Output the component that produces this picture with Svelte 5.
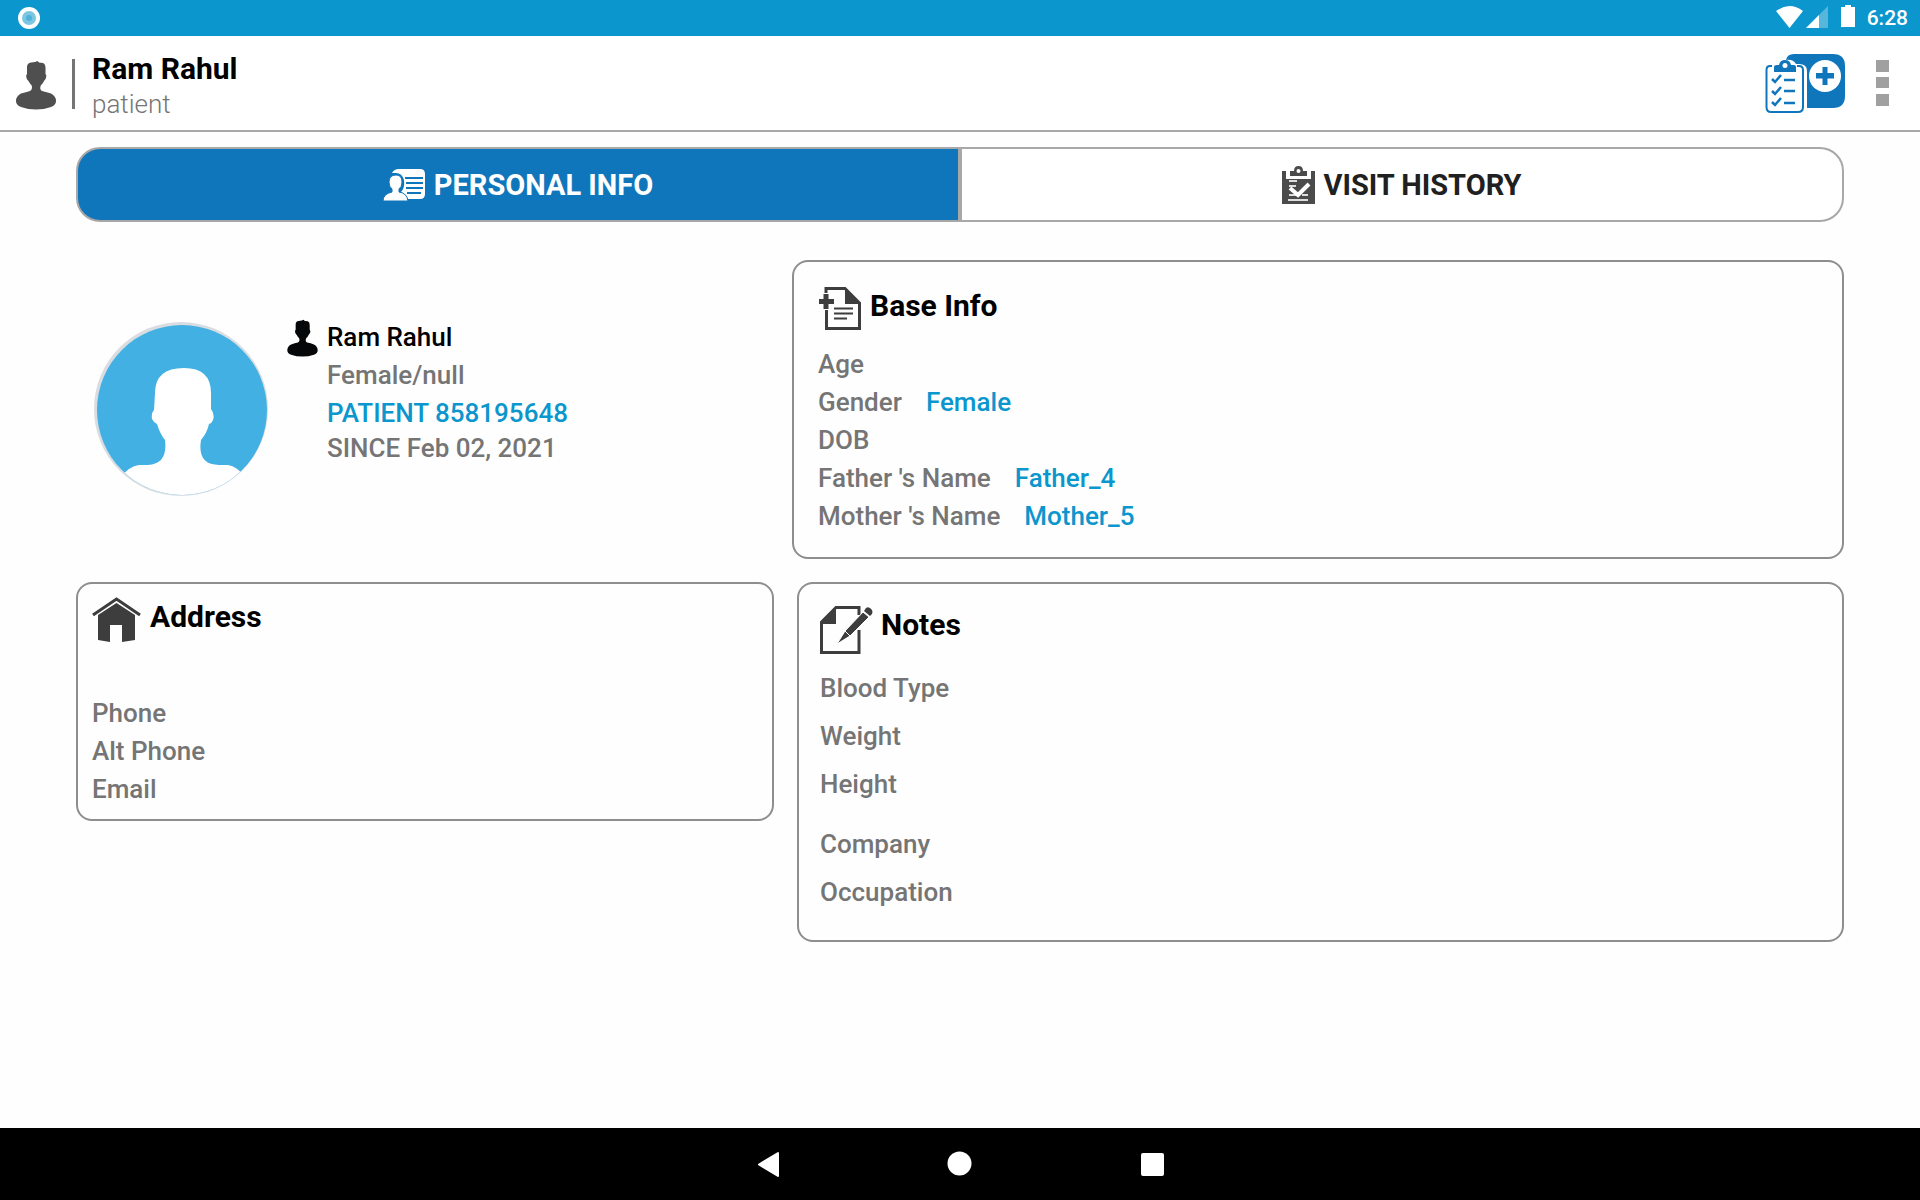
<script>
  let activeTab = $state('personal');

  const baseInfo = [
    { label: 'Age', value: '' },
    { label: 'Gender', value: 'Female' },
    { label: 'DOB', value: '' },
    { label: "Father 's Name", value: 'Father_4' },
    { label: "Mother 's Name", value: 'Mother_5' }
  ];
  const contact = ['Phone', 'Alt Phone', 'Email'];
  const body = ['Blood Type', 'Weight', 'Height'];
  const work = ['Company', 'Occupation'];
</script>

{#snippet person()}
  <svg class="person" viewBox="0 0 42 50" aria-hidden="true">
    <path fill="currentColor" d="M12 7 Q12 3 16 2.500 L20 2 L22.500 1 L24 2.500 L28 3 Q30.500 4 30.500 8 V14 Q32 15 31 18 Q30 20 29 21 Q27.500 24 26 25 Q24 29 27 31 Q32 32 36 33.500 Q41 36 41 41 Q41 45 36 47 Q29 49.500 21 49.500 Q13 49.500 6 47 Q1 45 1 41 Q1 36 6 33.500 Q11 32 15 31 Q18 29 16.500 25 Q15 24 13.500 21 Q12 20 11.500 18 Q10.500 15 12 14 Z" />
  </svg>
{/snippet}

<div class="screen">
  <div class="status">
    <svg width="24" height="24" viewBox="0 0 24 24" aria-hidden="true">
      <circle cx="12" cy="12" r="11" fill="#fff" />
      <circle cx="12" cy="12" r="7" fill="#7cc6e2" />
      <circle cx="12" cy="12" r="3" fill="#4cb2da" />
    </svg>
    <div class="system">
      <svg width="80" height="24" viewBox="0 0 80 24" aria-hidden="true">
        <path fill="#fff" d="M0 6 Q13.500 -4 27 6 L13.500 23 Z" />
        <path fill="#57b6dc" d="M52 1 V23 H30 Z" />
        <path fill="#fff" d="M43 10 V23 H30 Z" />
        <path fill="#fff" d="M69 0 H75 V2 H79 V22 H65 V2 H69 Z" />
      </svg>
      <time>6:28</time>
    </div>
  </div>

  <header>
    {@render person()}
    <div class="bar"></div>
    <div class="who">
      <h1>Ram Rahul</h1>
      <p>patient</p>
    </div>
    <button class="add" aria-label="Add visit">
      <svg width="80" height="60" viewBox="0 0 80 60" aria-hidden="true">
        <path fill="#1076bc" d="M21 6 Q22 0 29 0 H68 Q80 0 80 12 V42 Q80 54 68 54 H42 V17 Q42 10 34 10 H31 Q28 5 21 6 Z" />
        <circle cx="60" cy="22" r="16" fill="#fff" />
        <path fill="#1076bc" d="M57.500 13 H62.500 V19 H69 V24.500 H62.500 V31 H57.500 V24.500 H51 V19 H57.500 Z" />
        <path fill="none" stroke="#1076bc" stroke-width="2" d="M7 12 H5 Q1.500 12 1.500 16 V53 Q1.500 58 6 58 H33 Q38 58 38 53 V16 Q38 12 34 12 H32" />
        <path fill="#1076bc" d="M9 18 V13 Q9 11 12 11 H14 Q15 6 20 6 Q25 6 26 11 H29 Q31 11 31 13 V18 Z" />
        <circle cx="20" cy="11.500" r="2.500" fill="#fff" />
        <path fill="none" stroke="#1076bc" stroke-width="2.500" d="M7 25 L10 28 L16 21 M7 37 L10 40 L16 33 M7 48 L10 51 L16 44 M19 26 H30 M19 37 H30 M19 49 H30" />
      </svg>
    </button>
    <button class="menu" aria-label="More options">
      <svg width="14" height="46" viewBox="0 0 14 46" aria-hidden="true">
        <path fill="#a0a0a0" d="M0 0 H13 V12 H0 Z M0 17 H13 V28 H0 Z M0 34 H13 V46 H0 Z" />
      </svg>
    </button>
  </header>

  <main>
    <div class="tabs" role="tablist">
      <button role="tab" class:active={activeTab === 'personal'} aria-selected={activeTab === 'personal'} onclick={() => (activeTab = 'personal')}>
        <svg width="43" height="34" viewBox="0 0 43 34" aria-hidden="true">
          <path fill="#fff" d="M9 5 Q11 1 16 1 H37 Q42 1 42 6 V26 Q42 31 37 31 H25 Q23 26 18 24 Q22 20 21 12 Q19 5 13 5 Z" />
          <path stroke="#1076bc" stroke-width="2" d="M22 10 H40 M23 15 H40 M23 20 H40 M24 25 H38" />
          <path fill="#fff" stroke="#1076bc" d="M13 7 Q19 7 19 14 Q19 19 16 21 V24 Q24 25 25 33 H0 Q0 26 9 24 V21 Q6 19 6 14 Q6 7 13 7 Z" />
        </svg>
        <span>PERSONAL INFO</span>
      </button>
      <button role="tab" class:active={activeTab === 'visits'} aria-selected={activeTab === 'visits'} onclick={() => (activeTab = 'visits')}>
        <svg width="33" height="38" viewBox="0 0 33 38" aria-hidden="true">
          <path fill="#4b4b4b" d="M0 5 H4 V12 H29 V5 H33 V38 H0 Z" />
          <path fill="#4b4b4b" d="M8 10 V5 H12 Q12 0 16.500 0 Q21 0 21 5 H25 V10 Z" />
          <circle cx="16.500" cy="5" r="2" fill="#fff" />
          <path fill="none" stroke="#fff" stroke-width="2" d="M5 5 V12 H28 V5" />
          <path fill="none" stroke="#ddd" stroke-width="2" d="M7 15 H15 M6 34 H26 M7 20 H14 M7 29 H14 M20 29 H26" />
          <path fill="none" stroke="#fff" stroke-width="4" d="M8 22 L16 29 L27 18" />
        </svg>
        <span>VISIT HISTORY</span>
      </button>
    </div>

    <div class="top">
      <section class="profile">
        <svg class="avatar" viewBox="0 0 174 174" role="img" aria-label="Ram Rahul">
          <defs>
            <clipPath id="disc"><circle cx="88" cy="88" r="85" /></clipPath>
          </defs>
          <circle cx="87" cy="87" r="87" fill="#d9dde1" />
          <circle cx="88" cy="88" r="85" fill="#42b0e3" />
          <path clip-path="url(#disc)" fill="#fff" d="M61 71 Q61 46 90 46 Q117 46 117 71 V87 Q121 92 119 98 Q118 101 115 102 Q113 111 107 118 Q103 143 125 143 H134 Q143 144 153 157 V180 H25 V157 Q35 144 45 143 H54 Q74 142 71 118 Q66 112 63 102 Q60 101 58 97 Q57 91 60 88 Z" />
        </svg>
        {@render person()}
        <div class="lines">
          <p class="name">Ram Rahul</p>
          <p>Female/null</p>
          <p class="value">PATIENT 858195648</p>
          <p class="since">SINCE Feb 02, 2021</p>
        </div>
      </section>

      <section class="card base">
        <h2>
          <svg width="44" height="44" viewBox="0 0 44 44" aria-hidden="true">
            <path fill="none" stroke="#3d3d3d" stroke-width="3" d="M8 7 V2.500 H27 L41.500 17 V42.500 H8.500 V24" />
            <path fill="#3d3d3d" d="M27 2 L42 17 V18 H27 Z" />
            <path stroke="#3d3d3d" stroke-width="5" d="M8 8 V23 M1 15.500 H16" />
            <path stroke="#3d3d3d" stroke-width="2" d="M16 22.500 H35 M16 27.500 H35 M16 32.500 H29" />
          </svg>
          <span>Base Info</span>
        </h2>
        <dl>
          {#each baseInfo as row}
            <div>
              <dt>{row.label}</dt>
              <dd class="value">{row.value}</dd>
            </div>
          {/each}
        </dl>
      </section>
    </div>

    <div class="bottom">
      <section class="card address">
        <h2>
          <svg width="50" height="46" viewBox="0 0 50 46" aria-hidden="true">
            <path fill="none" stroke="#3d3d3d" stroke-width="3" d="M1 18 L24.500 2 L48 18" />
            <path fill="#3d3d3d" d="M6 18 L24.500 6 L43 18 V43 L30 45 V28 H18 V45 L6 43 Z" />
          </svg>
          <span>Address</span>
        </h2>
        <ul>
          {#each contact as label}<li>{label}</li>{/each}
        </ul>
      </section>

      <section class="card notes">
        <h2>
          <svg width="55" height="50" viewBox="0 0 55 50" aria-hidden="true">
            <path fill="none" stroke="#3d3d3d" stroke-width="3" d="M41 10 V2.500 H18 L3.500 17 V47.500 H41 V25" />
            <path fill="#3d3d3d" d="M18 2 V19 H3 V17 Z" />
            <path fill="#3d3d3d" stroke="#fff" d="M19 39 L27 26 L45 7 L51 12 L32 31 Z" />
            <path fill="#3d3d3d" d="M46 6 L48 3 Q51 1 54 5 Q55 7 54 9 L52 11 Z" />
            <path stroke="#fff" d="M27 26 L32 31" />
          </svg>
          <span>Notes</span>
        </h2>
        <ul>
          {#each body as label}<li>{label}</li>{/each}
        </ul>
        <ul class="work">
          {#each work as label}<li>{label}</li>{/each}
        </ul>
      </section>
    </div>
  </main>

  <nav aria-label="System navigation">
    <button aria-label="Back">
      <svg width="26" height="26" viewBox="0 0 26 26" aria-hidden="true"><path fill="#fff" stroke="#fff" stroke-width="2" stroke-linejoin="round" d="M23 2 V25 L4 13.500 Z" /></svg>
    </button>
    <button aria-label="Home">
      <svg width="26" height="26" viewBox="0 0 26 26" aria-hidden="true"><circle cx="12.500" cy="12.500" r="12" fill="#fff" /></svg>
    </button>
    <button aria-label="Recent apps">
      <svg width="26" height="26" viewBox="0 0 26 26" aria-hidden="true"><rect x="2" y="2" width="23" height="23" rx="2" fill="#fff" /></svg>
    </button>
  </nav>
</div>

<style>
  :global(body) {
    margin: 0;
  }
  .screen {
    box-sizing: border-box;
    display: flex;
    flex-direction: column;
    min-height: 100vh;
    background: #fefefe;
    color: #757575;
    font-family: Roboto, 'Liberation Sans', sans-serif;
    font-size: 26px;
    font-weight: 500;
    line-height: 38px;
  }
  h1, h2, p, ul, dl, dd {
    margin: 0;
    padding: 0;
  }
  ul {
    list-style: none;
  }
  svg {
    display: block;
    flex: none;
  }
  button {
    display: flex;
    align-items: center;
    justify-content: center;
    border: 0;
    padding: 0;
    background: none;
    font: inherit;
    cursor: pointer;
  }
  .status {
    display: flex;
    align-items: center;
    justify-content: space-between;
    height: 36px;
    padding: 0 12px 0 17px;
    background: #0b96cd;
    color: #fff;
    font-size: 21px;
  }
  .system {
    display: flex;
    align-items: center;
    gap: 11px;
  }
  .system svg {
    margin-bottom: 2px;
  }
  header {
    display: flex;
    align-items: flex-start;
    padding: 14px 30px 10px 15px;
    border-bottom: 2px solid #a8a8a8;
    background: #fff;
  }
  .person {
    width: 42px;
    height: 50px;
  }
  header .person {
    margin-top: 10px;
    color: #4f4f4f;
  }
  .bar {
    width: 3px;
    height: 50px;
    margin: 9px 17px 0 15px;
    background: #757575;
  }
  .who {
    flex: 1;
  }
  h1, h2 {
    color: #000;
    font-size: 30px;
    font-weight: 700;
    line-height: 38px;
  }
  .who p {
    font-weight: 300;
    line-height: 32px;
  }
  .add {
    margin: 4px 31px 0 0;
  }
  .menu {
    margin-top: 10px;
  }
  main {
    flex: 1;
    padding: 15px 76px 24px;
  }
  .tabs {
    display: grid;
    grid-template-columns: 1fr 1fr;
    gap: 4px;
    overflow: hidden;
    border: 2px solid #a8a8a8;
    border-radius: 24px;
    background: #a8a8a8;
  }
  .tabs button {
    gap: 8px;
    height: 71px;
    background: #fff;
    color: #202020;
    font-size: 29px;
    font-weight: 700;
  }
  .tabs button.active {
    background: #1076bc;
    color: #fff;
  }
  .top {
    display: grid;
    grid-template-columns: 716fr 1052fr;
    margin-top: 38px;
  }
  .bottom {
    display: grid;
    grid-template-columns: 698fr 1047fr;
    align-items: start;
    gap: 23px;
    margin-top: 23px;
  }
  .profile {
    display: flex;
    align-items: flex-start;
    padding: 58px 0 0 18px;
  }
  .avatar {
    width: 174px;
    height: 174px;
    margin: 4px 18px 0 0;
  }
  .profile .person {
    width: 33px;
    height: 38px;
    margin: 1px 8px 0 0;
    color: #060708;
  }
  .name {
    color: #000;
  }
  .value {
    color: #0b96cd;
  }
  .since {
    line-height: 32px;
  }
  .card {
    border: 2px solid #8e8e8e;
    border-radius: 16px;
  }
  .base {
    padding: 24px 24px 22px;
  }
  .address {
    padding: 13px 14px 11px;
  }
  .notes {
    padding: 21px 19px 24px;
  }
  h2 {
    display: flex;
    align-items: flex-start;
    gap: 8px;
    line-height: 40px;
  }
  dl {
    margin-top: 15px;
  }
  dl div {
    display: flex;
    gap: 24px;
  }
  .address ul {
    margin-top: 51px;
  }
  .notes ul {
    margin-top: 9px;
    padding-left: 2px;
    line-height: 48px;
  }
  .notes .work {
    margin-top: 12px;
  }
  nav {
    display: flex;
    justify-content: center;
    gap: 96px;
    background: #000;
  }
  nav button {
    width: 96px;
    height: 72px;
  }
</style>
